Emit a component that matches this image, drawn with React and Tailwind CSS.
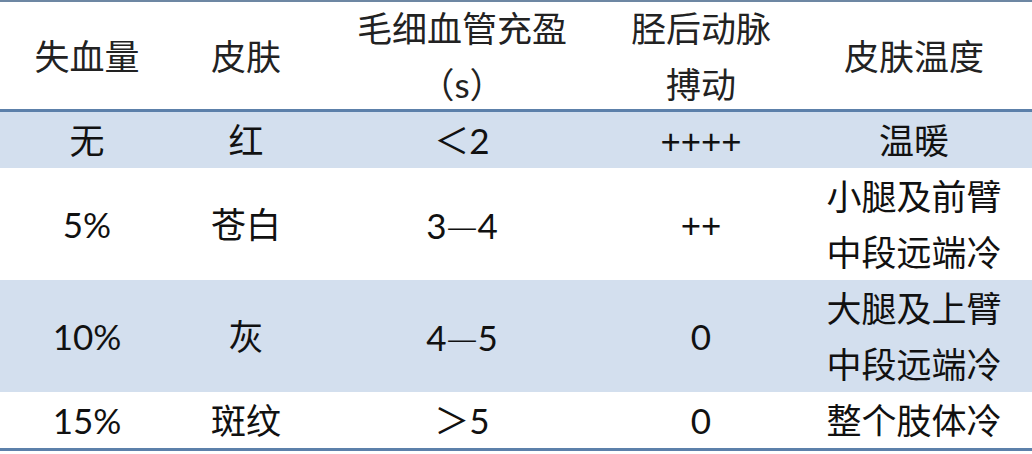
import React from "react";

const rows = [
  { blue: true, cells: ["无", "红", "＜2", "++++", "温暖"] },
  { blue: false, cells: ["5%", "苍白", "3—4", "++", "小腿及前臂\n中段远端冷"] },
  { blue: true, cells: ["10%", "灰", "4—5", "0", "大腿及上臂\n中段远端冷"] },
  { blue: false, cells: ["15%", "斑纹", "＞5", "0", "整个肢体冷"] },
];

const headers = ["失血量", "皮肤", "毛细血管充盈\n（s）", "胫后动脉\n搏动", "皮肤温度"];

const widths = ["w-[174px]", "w-[144px]", "w-[288px]", "w-[190px]", "w-[236px]"];

// the long dash comes from the CJK font, Lato's is too short
const Line = ({ line }) => {
  if (!line.includes("—")) return line;
  const [a, b] = line.split("—");
  return (
    <>
      {a}
      <span style={{ fontFamily: "'Noto Sans CJK SC', sans-serif" }} className="font-light">
        —
      </span>
      {b}
    </>
  );
};

const Cell = ({ text, className }) => (
  <div className={`flex flex-col items-center justify-center text-center ${className}`}>
    {text.split("\n").map((line) => (
      <span key={line} className="block leading-[56px] whitespace-nowrap">
        <Line line={line} />
      </span>
    ))}
  </div>
);

export default function App() {
  return (
    <div
      className="w-[1032px] h-[454px] bg-white text-black text-[35px] overflow-hidden"
      style={{ fontFamily: "Lato, 'Noto Sans CJK SC', sans-serif" }}
    >
      <div className="border-t-2 border-[#6d87a3]">
        {/* header */}
        <div className="flex h-[110px] border-b-[3px] border-[#5c80aa]">
          {headers.map((h, i) => (
            <Cell key={h} text={h} className={`${widths[i]} text-[#222]`} />
          ))}
        </div>

        {/* body */}
        {rows.map((row, r) => (
          <div
            key={r}
            className={`flex ${row.blue ? "bg-[#d3dfee]" : "bg-white"} ${
              row.cells[4].includes("\n") ? "h-[112px]" : "h-[56px]"
            }`}
          >
            {row.cells.map((c, i) => (
              <Cell key={i} text={c} className={`${widths[i]} text-[#111]`} />
            ))}
          </div>
        ))}

        <div className="h-[3px] bg-[#5c80aa]" />
      </div>
    </div>
  );
}
